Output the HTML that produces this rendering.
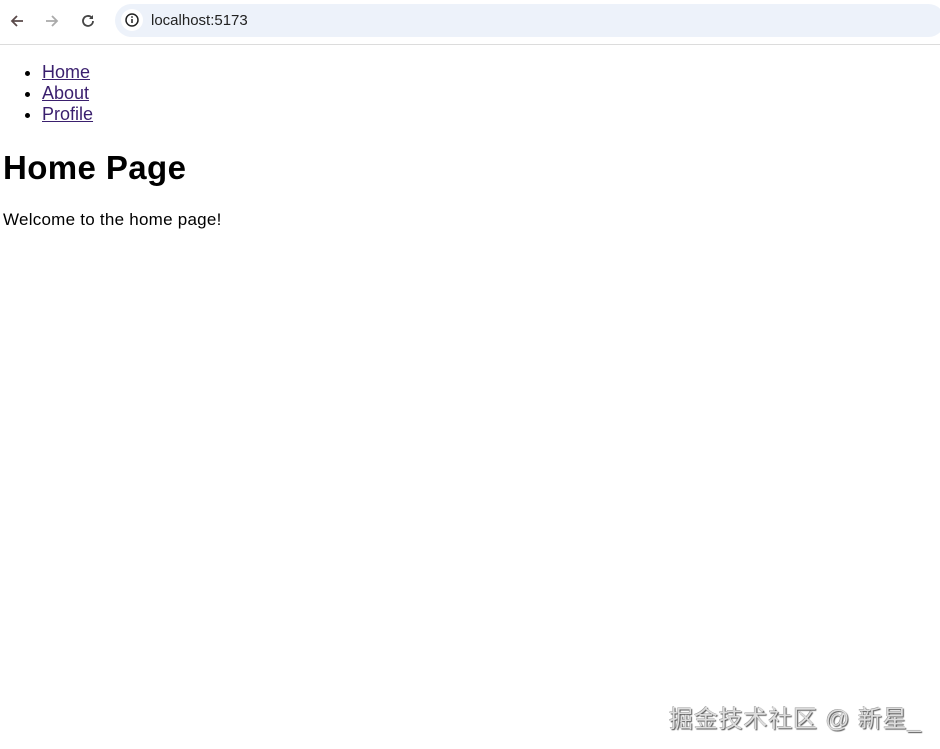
<!DOCTYPE html>
<html><head><meta charset="utf-8"><style>
html,body{margin:0;padding:0;width:940px;height:749px;overflow:hidden;background:#fff;font-family:"Liberation Sans","Noto Sans CJK SC",sans-serif;}
.bar{position:absolute;left:0;top:0;width:940px;height:44px;background:#fff;border-bottom:1px solid #dcdcdc;}
.url{position:absolute;left:115px;top:4px;width:830px;height:33px;background:#edf2fa;border-radius:17px;}
.urltext{position:absolute;left:151px;top:12px;font-size:15px;color:#222;}
.info{position:absolute;left:121px;top:9px;width:22px;height:22px;border-radius:50%;background:#fff;}
.info svg{position:absolute;left:3px;top:3px}
ul{position:absolute;top:62px;left:0;margin:0;padding-left:42px;font-size:18px;line-height:21px;}
a{color:#3a1f6e;}
h1{position:absolute;top:149px;left:3px;margin:0;font-size:33px;line-height:38px;font-weight:bold;letter-spacing:0.4px;}
p{position:absolute;top:210px;left:3px;margin:0;font-size:17px;letter-spacing:0.25px;}
.wm{position:absolute;left:669px;top:699px;font-size:24px;color:#ddd;text-shadow:1px 1px 1px #555,-0.5px -0.5px 0 #999;letter-spacing:0.8px;}
</style></head><body>
<div class="bar">
<svg style="position:absolute;left:8px;top:12px" width="18" height="18" viewBox="0 0 18 18"><path d="M15 9H4M9 4L4 9l5 5" stroke="#5a4a4a" stroke-width="1.8" fill="none"/></svg>
<svg style="position:absolute;left:43px;top:12px" width="18" height="18" viewBox="0 0 18 18"><path d="M3 9h11M9 4l5 5-5 5" stroke="#aaa" stroke-width="1.8" fill="none"/></svg>
<svg style="position:absolute;left:79px;top:12px" width="18" height="18" viewBox="0 0 18 18"><path d="M14 9a5 5 0 1 1-1.5-3.6" stroke="#444" stroke-width="1.8" fill="none"/><path d="M14 3v4h-4z" fill="#444"/></svg>
<div class="url"></div>
<div class="info"><svg width="16" height="16" viewBox="0 0 16 16"><circle cx="8" cy="8" r="6" stroke="#222" stroke-width="1.5" fill="none"/><path d="M8 7v4" stroke="#222" stroke-width="1.5"/><circle cx="8" cy="5" r="0.9" fill="#222"/></svg></div>
<div class="urltext">localhost:5173</div>
</div>
<ul><li><a href="#">Home</a></li><li><a href="#">About</a></li><li><a href="#">Profile</a></li></ul>
<h1>Home Page</h1>
<p>Welcome to the home page!</p>
<div class="wm">掘金技术社区 @ 新星_</div>
</body></html>
